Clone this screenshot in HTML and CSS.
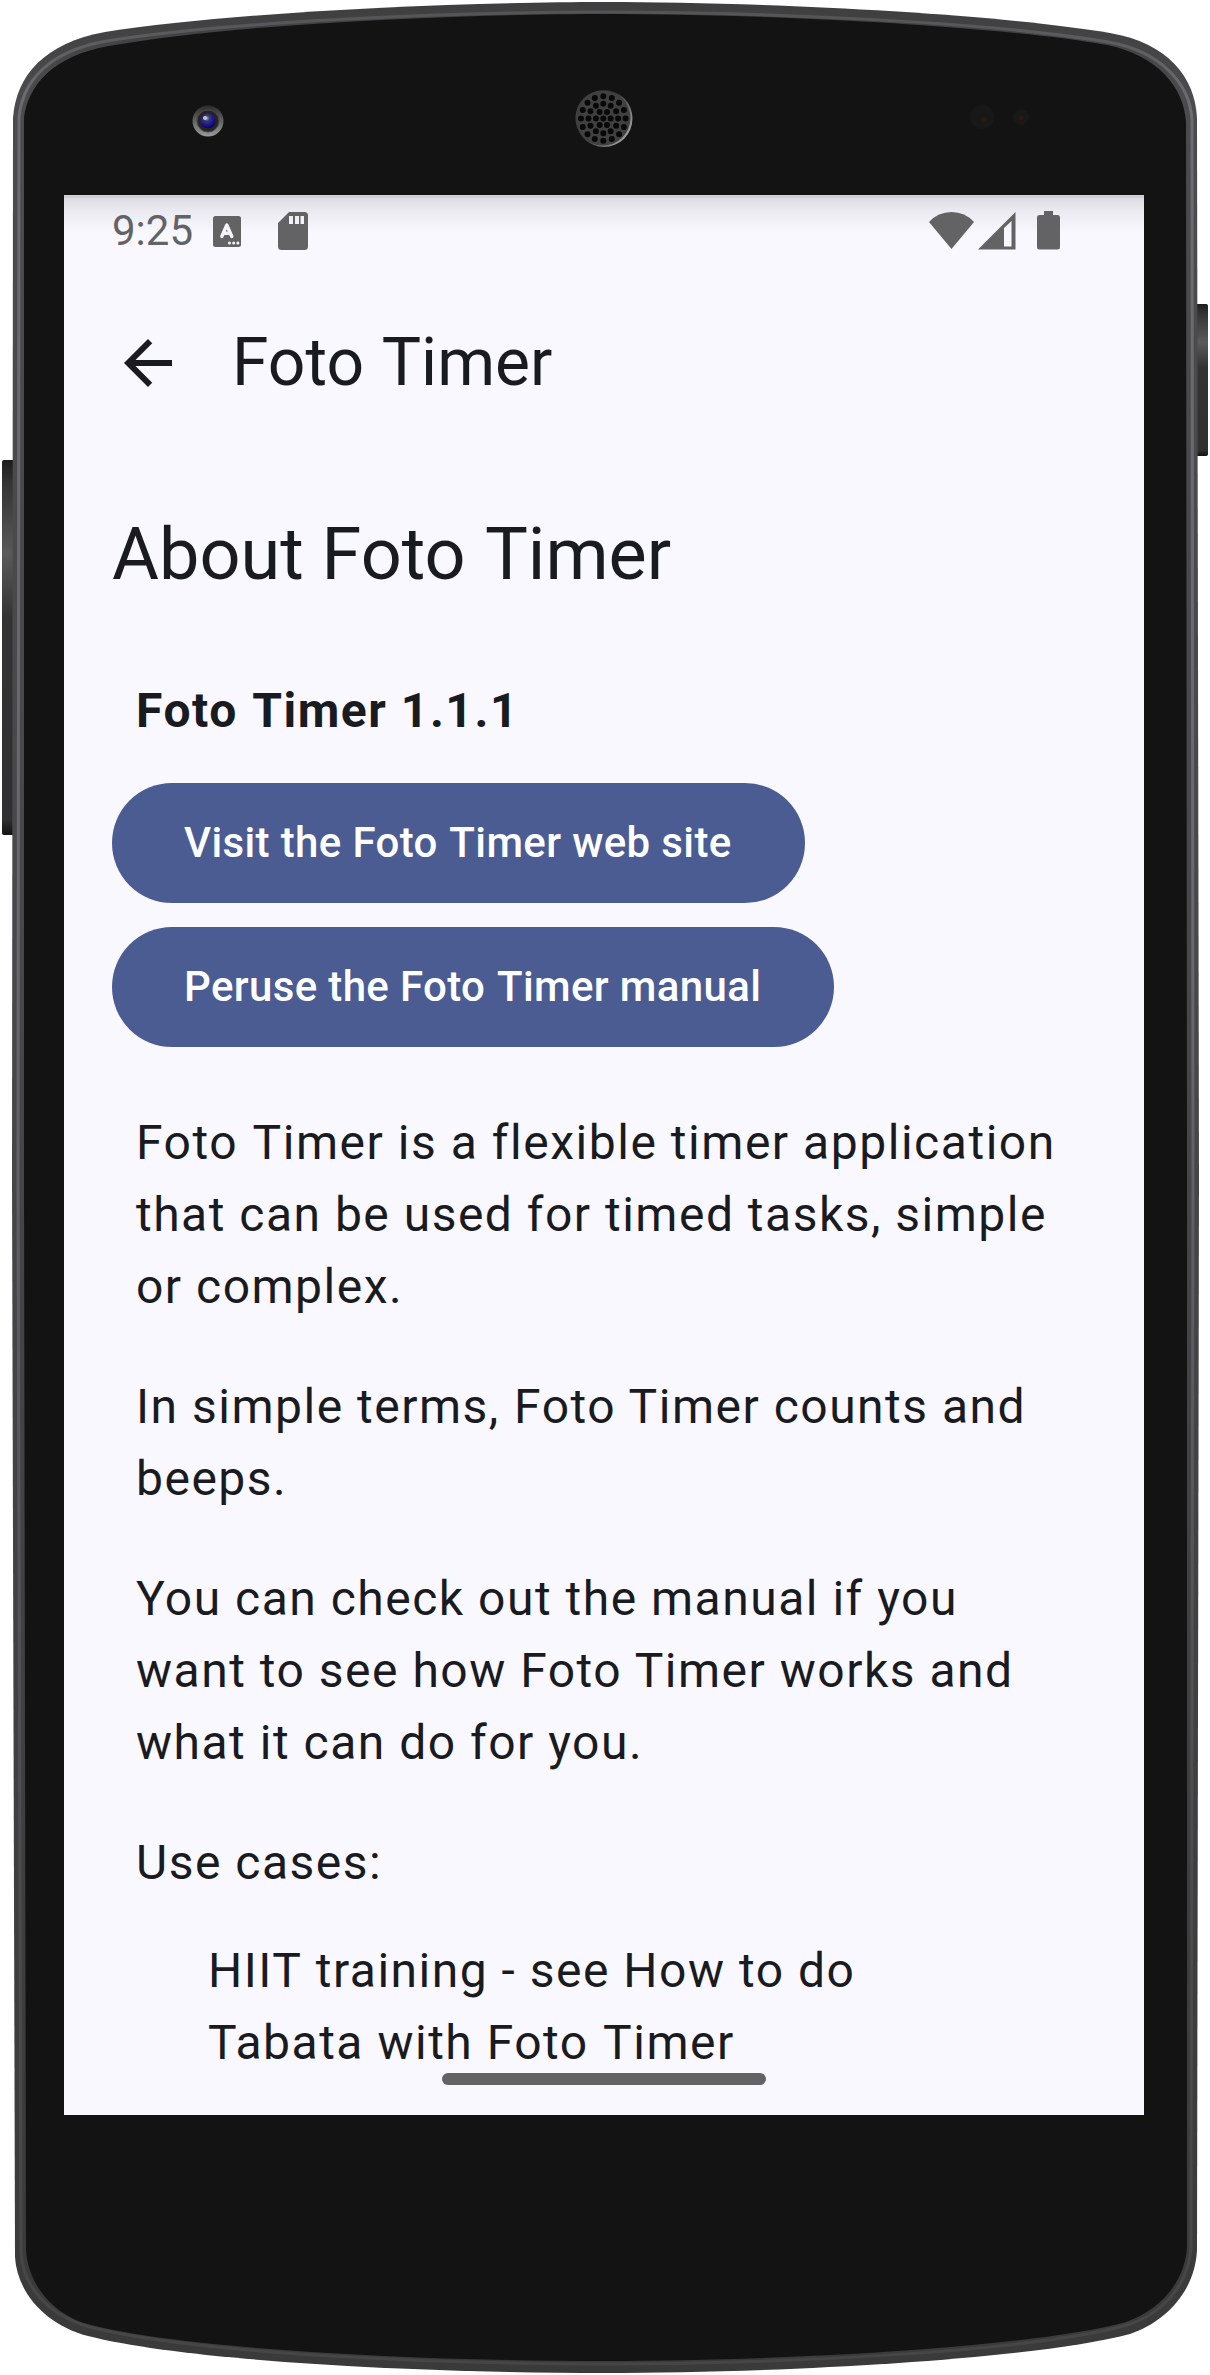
FILE: index.html
```html
<!DOCTYPE html>
<html lang="en">
<head>
<meta charset="utf-8">
<title>Foto Timer</title>
<link rel="stylesheet" href="styles.css">
</head>
<body>
<div class="device">
  <svg class="shell" width="1210" height="2375" viewBox="0 0 1210 2375">
    <defs>
      <linearGradient id="edge" gradientUnits="userSpaceOnUse" x1="0" y1="0" x2="0" y2="2375">
        <stop offset="0" stop-color="#3e3e3f"/><stop offset=".04" stop-color="#4b4b4d"/><stop offset=".4" stop-color="#48484b"/><stop offset=".8" stop-color="#3e3e3f"/><stop offset="1" stop-color="#3a3a3b"/>
      </linearGradient>
      <linearGradient id="shine" gradientUnits="userSpaceOnUse" x1="0" y1="0" x2="0" y2="2375">
        <stop offset="0" stop-color="#515153"/><stop offset=".04" stop-color="#6c6c6e"/><stop offset=".4" stop-color="#68686d"/><stop offset=".8" stop-color="#4b4b4d"/><stop offset="1" stop-color="#464647"/>
      </linearGradient>
      <linearGradient id="key" x1="0" y1="0" x2="0" y2="1">
        <stop offset="0" stop-color="#1c1c1c"/><stop offset=".06" stop-color="#333"/><stop offset=".25" stop-color="#5a5a5a"/><stop offset=".42" stop-color="#333"/><stop offset=".96" stop-color="#303030"/><stop offset="1" stop-color="#111"/>
      </linearGradient>
      <radialGradient id="lens" cx=".42" cy=".32" r=".65">
        <stop offset="0" stop-color="#a0a8c0"/><stop offset=".3" stop-color="#38386a"/><stop offset=".7" stop-color="#1c12a0"/><stop offset="1" stop-color="#0c0840"/>
      </radialGradient>
      <linearGradient id="ring" x1="0" y1="0" x2="0" y2="1">
        <stop offset="0" stop-color="#2b2b2b"/><stop offset="1" stop-color="#9a9a9a"/>
      </linearGradient>
      <linearGradient id="rim" x1="0" y1="0" x2="1" y2=".7">
        <stop offset=".45" stop-color="#2a2a2a"/><stop offset="1" stop-color="#a0a0a0"/>
      </linearGradient>
    </defs>
    <rect x="2" y="460" width="14" height="375" rx="2" fill="url(#key)"/>
    <rect x="1195" y="304" width="13" height="152" rx="2" fill="url(#key)"/>
    <path fill="url(#edge)" d="M605 2C750 2 985 12 1110 33C1168 43 1195 77 1197 118L1199 1180L1197 2250C1195 2292 1165 2322 1130 2334C1030 2360 780 2373 605 2373C430 2373 190 2362 88 2336C45 2325 17 2292 15 2257L12 1180L13 118C16 75 45 43 105 32C230 12 460 2 605 2Z"/>
    <path fill="none" stroke="url(#shine)" stroke-width="3" d="M605 12C750 12 985 21 1108 42C1160 51 1190 83 1192 120L1193 1180L1191 2248C1188 2286 1162 2314 1127 2325C1030 2352 780 2364 605 2364C430 2364 190 2353 90 2327C50 2316 23 2288 21 2253L18 1180L19 118C22 82 48 51 107 41C230 21 460 12 605 12Z"/>
    <path fill="#131313" d="M605 14C750 14 985 24 1107 45C1156 55 1184 86 1186 122L1187 1180L1187 2247C1185 2282 1160 2310 1126 2322C1030 2348 780 2361 605 2361C430 2361 190 2350 91 2325C54 2316 28 2285 26 2250L24 1180L24 118C28 86 52 56 109 46C230 24 460 14 605 14Z"/>
    <circle cx="208" cy="121" r="15.500" fill="url(#ring)"/>
    <circle cx="208" cy="121" r="11" fill="#242424" stroke="#494949"/>
    <circle cx="208" cy="121" r="7.500" fill="url(#lens)"/>
    <circle cx="205" cy="118" r="2" fill="#bdc5d0"/>
    <circle cx="604" cy="118.500" r="28.500" fill="url(#rim)"/>
    <circle cx="603" cy="118" r="27.500" fill="#404040"/>
    <circle cx="603.300" cy="118.500" r="3" fill="#080808"/>
    <g fill="none" stroke="#080808" stroke-width="6" stroke-linecap="round">
      <circle cx="603.300" cy="118.500" r="7.400" pathLength="6" stroke-dasharray="0 1"/>
      <circle cx="603.300" cy="118.500" r="14.800" pathLength="12" stroke-dasharray="0 1"/>
      <circle cx="603.300" cy="118.500" r="22.300" pathLength="16" stroke-dasharray="0 1"/>
    </g>
    <circle cx="982" cy="117" r="12" fill="#191818"/><circle cx="984" cy="119" r="2.500" fill="#261b18"/>
    <circle cx="1021" cy="117" r="8" fill="#191818"/><circle cx="1021" cy="118" r="2.500" fill="#261b18"/>
  </svg>

  <main class="screen">
    <header class="status">
      <span class="clock">9:25</span>
      <svg class="ic-font" width="28" height="31" viewBox="0 0 28 31"><rect width="28" height="31" rx="2.500" fill="#636366"/><path d="M8.800 20.500L13.800 9L18.800 20.500M11 17.200H16.600" fill="none" stroke="#f5f4fa" stroke-width="3.400" stroke-linecap="round" stroke-linejoin="round"/><g fill="#f5f4fa"><circle cx="16.500" cy="27" r="1.500"/><circle cx="20.700" cy="27" r="1.500"/><circle cx="24.900" cy="27" r="1.500"/></g></svg>
      <svg class="ic-sd" width="30" height="38" viewBox="0 0 30 38"><path fill="#636366" fill-rule="evenodd" d="M11 0H26.500Q30 0 30 3.500V34.500Q30 38 26.500 38H3.500Q0 38 0 34.500V11ZM11 4V12H15V4ZM17 4V12H21V4ZM22.500 4V12H26V4Z"/></svg>
      <svg class="ic-right" width="132" height="40" viewBox="0 0 132 40"><g fill="#636366"><path d="M0 11Q9 1 22.500 1T45 11L22.500 38Z"/><path fill-rule="evenodd" d="M49 38.500L86.500 1V38.500ZM75 17V35.500H82.500V10Z"/><path d="M115 0H124V4H128.500Q131 4 131 6.500V36Q131 38.500 128.500 38.500H110.500Q108 38.500 108 36V6.500Q108 4 110.500 4H115Z"/></g></svg>
    </header>
    <nav class="appbar">
      <svg width="48" height="48" viewBox="0 0 24 24"><path fill="#1a1b21" d="M24 10.500H5.745L14.130 2.115L12 0L0 12L12 24L14.115 21.885L5.745 13.500H24Z"/></svg>
      <span class="title">Foto <span class="gap">Timer</span></span>
    </nav>
    <section class="content">
      <h1>About Foto <span class="gap">Timer</span></h1>
      <p class="version">Foto <span class="gap">Timer</span> 1.1.1</p>
      <div class="actions">
        <button>Visit the Foto <span class="gap">Timer</span> web site</button>
        <button>Peruse the Foto <span class="gap">Timer</span> manual</button>
      </div>
      <div class="copy">
        <p class="lead">Foto <span class="gap">Timer</span> is a flexible timer application<br><span class="rest">that can be used for timed tasks, simple<br>or complex.</span></p>
        <p>In simple terms, <span class="gap">Foto</span> Timer counts and<br>beeps.</p>
        <p>You can check out the manual if you<br>want to see how Foto Timer works and<br>what it can do for you.</p>
        <p>Use cases:</p>
        <p class="case">HIIT <span class="gap">training</span> - see How to do<br>Tabata with Foto <span class="gap">Timer</span></p>
      </div>
    </section>
    <div class="handle"></div>
  </main>
</div>
</body>
</html>
```
FILE: styles.css
```css
* { box-sizing: border-box; }
body { margin: 0; background: #fff; font-family: Roboto, sans-serif; color: #1a1b21; }
.device { position: relative; width: 1210px; height: 2375px; padding: 195px 66px 260px 64px; overflow: hidden; }
.shell { position: absolute; left: 0; top: 0; }
.screen {
  position: relative; width: 1080px; height: 1920px; overflow: hidden; background: #f9f8ff;
}
.status {
  display: flex; align-items: flex-start; height: 72px; padding: 16px 83px 0 48px;
  background: linear-gradient(#d1ced5 0 3px, #dedce3 3px, #eceaf1 16px, #f9f8ff 38px);
}
.clock { width: 101px; margin-top: -1px; font-size: 42px; line-height: 42px; color: #636366; white-space: nowrap; }
.ic-font { margin-top: 5px; }
.ic-sd { margin: 1px 0 0 37px; }
.ic-right { margin-left: auto; }
.appbar { display: flex; align-items: center; height: 192px; padding-left: 60px; }
.title { margin-left: 60px; font-size: 66px; line-height: 84px; }
.gap { margin-left: .02em; }
.content { padding: 48px; }
h1 { margin: 0; font-size: 72px; line-height: 96px; font-weight: 400; }
.version { margin: 72px 24px 36px; font-size: 48px; line-height: 72px; font-weight: 700; letter-spacing: 1.53px; }
.actions { display: flex; flex-direction: column; align-items: flex-start; gap: 24px; }
button {
  height: 120px; padding: 0 73px 0 72px; border: 0; border-radius: 60px; background: #4a5c92; color: #fff;
  font: 500 42px/60px Roboto, sans-serif; letter-spacing: .36px; white-space: nowrap;
}
.copy { padding: 60px 24px 0; font-size: 48px; line-height: 72px; letter-spacing: 1.5px; white-space: nowrap; }
.copy p { margin: 0 0 48px; }
.copy .lead { letter-spacing: 1.53px; }
.rest { letter-spacing: 1.49px; }
.copy .case { margin: -12px 0 0 72px; }
.handle { position: absolute; left: 378px; bottom: 30px; width: 324px; height: 12px; border-radius: 6px; background: #636366; }
```
